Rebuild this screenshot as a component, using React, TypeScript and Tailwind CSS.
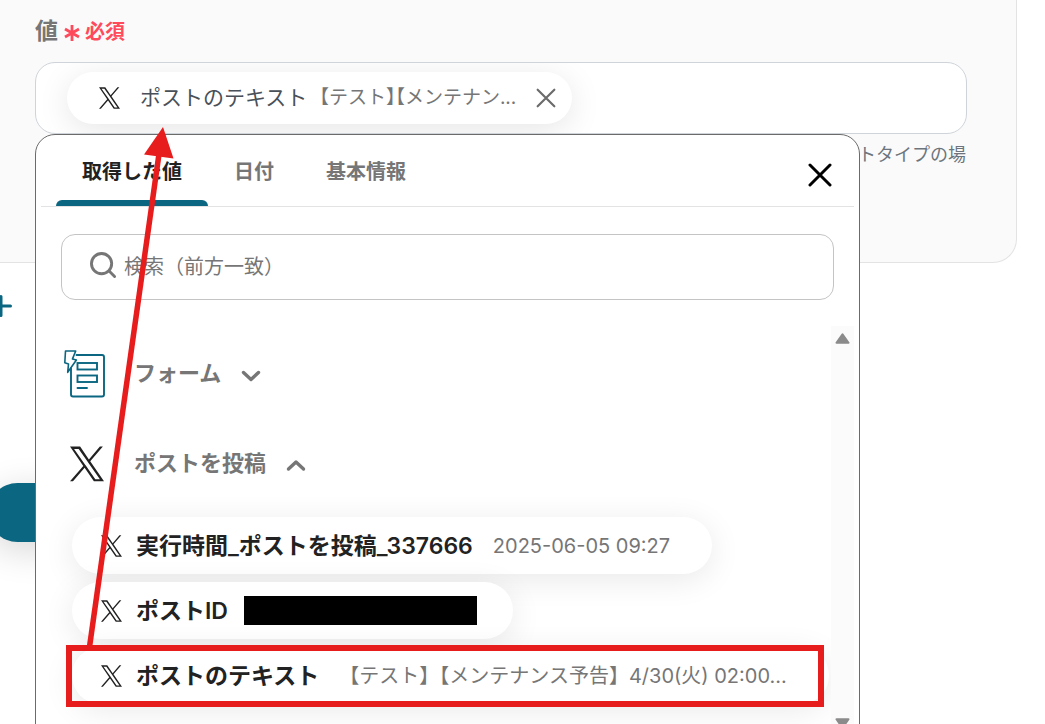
import { useState } from "react";
import type { ReactNode } from "react";

function XLogo({ className }: { className: string }) {
  return (
    <svg viewBox="0 0 1200 1227" fill="currentColor" className={className} aria-hidden="true">
      <path d="M714.163 519.284L1160.89 0H1055.03L667.137 450.887L357.328 0H0L468.492 681.821L0 1226.37H105.866L515.491 750.218L842.672 1226.37H1200L714.137 519.284H714.163ZM569.165 687.828L521.697 619.934L144.011 79.6944H306.615L611.412 515.685L658.88 583.579L1055.08 1150.3H892.476L569.165 687.854V687.828Z" />
    </svg>
  );
}

function CloseIcon({ className, width }: { className: string; width: number }) {
  return (
    <svg viewBox="0 0 24 24" fill="none" stroke="currentColor" strokeWidth={width} strokeLinecap="round" className={className} aria-hidden="true">
      <path d="M2 2L22 22M22 2L2 22" />
    </svg>
  );
}

function Chevron({ up = false }: { up?: boolean }) {
  return (
    <svg viewBox="0 0 20 14" fill="none" stroke="currentColor" strokeWidth="3.4" strokeLinecap="round" strokeLinejoin="round" className="mt-1 h-3.5 w-5" aria-hidden="true">
      <path d={up ? "M2.5 10L10 3L17.5 10" : "M2.5 3.5L10 10.5L17.5 3.5"} />
    </svg>
  );
}

function FormIcon() {
  return (
    <svg viewBox="0 0 42 48" fill="none" stroke="#0b6681" strokeWidth="1.9" strokeLinejoin="round" strokeLinecap="round" className="h-12 w-[42px]" aria-hidden="true">
      <path d="M12.5 5H38A2 2 0 0 1 40 7V44.5A2 2 0 0 1 38 46.500H9A2 2 0 0 1 7 44.500V18.500" />
      <rect x="13.500" y="13" width="19.500" height="6.500" strokeLinejoin="miter" />
      <rect x="13.500" y="25.500" width="19.500" height="6.500" strokeLinejoin="miter" />
      <path d="M13.500 38H23" />
      <path d="M1.500 1H11.700L8.500 8.900L12.400 10L3.700 22.300L4.500 14L0.800 12.800Z" strokeWidth="1.600" />
    </svg>
  );
}

function Tab({ active, onClick, children }: { active: boolean; onClick: () => void; children: ReactNode }) {
  return (
    <button
      type="button"
      role="tab"
      aria-selected={active}
      onClick={onClick}
      className={`flex flex-col pt-[21px] text-xl leading-8 font-semibold ${active ? "text-[#222]" : "text-[#767676]"}`}
    >
      <span className="px-[26px]">{children}</span>
      <span className={`mt-auto h-1.5 w-full rounded-t-md ${active ? "bg-[#0b6681]" : ""}`} />
    </button>
  );
}

function Group({ icon, title, open = false }: { icon: ReactNode; title: string; open?: boolean }) {
  return (
    <button type="button" aria-expanded={open} className="flex h-12 items-center text-[22px] leading-8 font-semibold text-[#767676]">
      <span className="flex w-[46px]">{icon}</span>
      <span className="mr-5 mb-0.5 ml-6">{title}</span>
      <Chevron up={open} />
    </button>
  );
}

function Pill({ title, end, children }: { title: string; end: string; children: ReactNode }) {
  return (
    <button
      type="button"
      className={`flex h-[57px] items-center rounded-full bg-white pl-[29px] text-[#222] whitespace-nowrap shadow-[0_6px_32px_rgba(0,0,0,0.09)] ${end}`}
    >
      <XLogo className="h-[22px] w-[21px]" />
      <span className="ml-3.5 text-[23px] leading-8 font-semibold">{title}</span>
      {children}
    </button>
  );
}

const TABS = ["取得した値", "日付", "基本情報"];

export default function App() {
  const [tab, setTab] = useState(0);

  return (
    <div className="relative h-screen overflow-hidden bg-white font-['Inter','Noto_Sans_CJK_JP',sans-serif]">
      <section className="mr-7 rounded-br-3xl border-r border-b border-[#e3e3e3] bg-[#fafafa] pt-[13px] pr-[49px] pb-[88px] pl-[35px]">
        <div className="flex h-9 items-center font-semibold">
          <span className="text-[23px] text-[#767676]">値</span>
          <svg viewBox="0 0 16 16" className="mt-1 ml-1.5 h-4 w-4" fill="none" stroke="#ff4a5c" strokeWidth="2.8" aria-hidden="true">
            <path d="M8 0V16M1 4L15 12M15 4L1 12" />
          </svg>
          <span className="mt-0.5 ml-[5px] text-xl text-[#ff4a5c]">必須</span>
        </div>

        <div className="relative mt-[13px]">
          <div className="flex h-[72px] items-center overflow-hidden rounded-[20px] border border-[#cfd4da] bg-white pl-[31px]">
            <div className="flex h-[52px] items-center rounded-full bg-white pr-4 pl-8 whitespace-nowrap shadow-[0_6px_32px_rgba(0,0,0,0.1)]">
              <XLogo className="h-[22px] w-[21px] text-[#222]" />
              <span className="ml-5 text-[21px] text-[#495057]">ポストのテキスト</span>
              <span className="ml-3 text-[19px] text-[#767676] [font-feature-settings:'halt']">【テスト】【メンテナン...</span>
              <button type="button" aria-label="削除" className="ml-5 text-[#6b6b6b]">
                <CloseIcon className="h-5 w-5" width={2.6} />
              </button>
            </div>
          </div>

          <div className="absolute top-[72px] left-0 z-10 w-[825px] rounded-t-[20px] border border-[#6b6b6b] bg-white">
            <div className="mx-[5px] flex h-[72px] justify-between border-b border-[#e3e3e3] pl-[15px]">
              <div role="tablist" className="flex">
                {TABS.map((name, i) => (
                  <Tab key={name} active={tab === i} onClick={() => setTab(i)}>
                    {name}
                  </Tab>
                ))}
              </div>
              <button type="button" aria-label="閉じる" className="mt-2 mr-[22px] self-center text-black">
                <CloseIcon className="h-6 w-6" width={3} />
              </button>
            </div>

            <label className="mx-[25px] mt-[27px] flex h-[66px] items-center rounded-[14px] border border-[#c4c4c4] pl-7">
              <svg viewBox="0 0 28 28" fill="none" stroke="#767676" strokeWidth="3" strokeLinecap="round" className="mb-1 h-[27px] w-[27px]" aria-hidden="true">
                <circle cx="12" cy="12" r="10.500" />
                <path d="M19.800 19.800L25.500 25.500" />
              </svg>
              <input
                type="text"
                aria-label="検索（前方一致）"
                placeholder="検索（前方一致）"
                className="ml-[7px] min-w-0 flex-1 bg-transparent text-xl leading-8 text-[#222] outline-none placeholder:text-[#767676]"
              />
            </label>

            <div className="mt-[26px] mr-[5px] flex h-[409px]">
              <div className="flex min-w-0 flex-1 flex-col items-start overflow-hidden pt-6 pl-[28px]">
                <Group icon={<FormIcon />} title="フォーム" />
                <div className="mt-[42px]">
                  <Group icon={<XLogo className="ml-1.5 h-9 w-[34px] text-[#222]" />} title="ポストを投稿" open />
                </div>
                <div className="mt-[29px] ml-2 flex flex-col items-start gap-2">
                  <Pill title="実行時間_ポストを投稿_337666" end="pr-[42px]">
                    <span className="ml-5 text-xl text-[#767676]">2025-06-05 09:27</span>
                  </Pill>
                  <Pill title="ポストID" end="pr-9">
                    <span className="ml-4 h-[29px] w-[233px] bg-black" />
                  </Pill>
                  <Pill title="ポストのテキスト" end="pr-[42px]">
                    <span className="ml-5 text-xl text-[#767676]">【テスト】【メンテナンス予告】4/30(火) 02:00...</span>
                  </Pill>
                </div>
              </div>
              <div className="flex w-[23px] flex-col items-center justify-between bg-[#fbfbfb] pt-[7px] pb-1.5 text-[#8b8b8b]">
                <svg viewBox="0 0 15 11" className="h-[11px] w-[15px]" fill="currentColor" stroke="currentColor" strokeWidth="2" strokeLinejoin="round" aria-hidden="true">
                  <path d="M7.500 1.200L13.500 9.800H1.500Z" />
                </svg>
                <svg viewBox="0 0 15 11" className="h-[11px] w-[15px]" fill="currentColor" stroke="currentColor" strokeWidth="2" strokeLinejoin="round" aria-hidden="true">
                  <path d="M7.500 9.800L1.500 1.200H13.500Z" />
                </svg>
              </div>
            </div>
          </div>
        </div>

        <p className="mt-[3px] mb-px pr-px text-right text-[18px] leading-9 text-[#6c757d]">トタイプの場</p>
      </section>

      <div className="flex flex-col items-start">
        <button type="button" aria-label="追加" className="mt-8 -ml-2.5 text-[#0b6681]">
          <svg viewBox="0 0 22 22" className="h-[22px] w-[22px]" fill="none" stroke="currentColor" strokeWidth="3" strokeLinecap="round" aria-hidden="true">
            <path d="M11 1.500V20.500M1.500 11H20.500" />
          </svg>
        </button>
        <button
          type="button"
          aria-label="保存"
          className="mt-[166px] -ml-3 h-[59px] w-60 rounded-full bg-[#0b6681] shadow-[0_8px_36px_rgba(0,0,0,0.16)]"
        />
      </div>

      <div className="pointer-events-none absolute top-[645px] left-[66px] z-20 h-[62px] w-[758px] border-6 border-[#e71c1c]" />
      <svg viewBox="0 0 100 530" className="pointer-events-none absolute top-[120px] left-[80px] z-20 h-[530px] w-[100px]" aria-hidden="true">
        <path d="M9.500 527L79 34" stroke="#e71c1c" strokeWidth="5.500" />
        <path d="M83 7L64 34.500L93.500 38.500Z" fill="#e71c1c" />
      </svg>
    </div>
  );
}
